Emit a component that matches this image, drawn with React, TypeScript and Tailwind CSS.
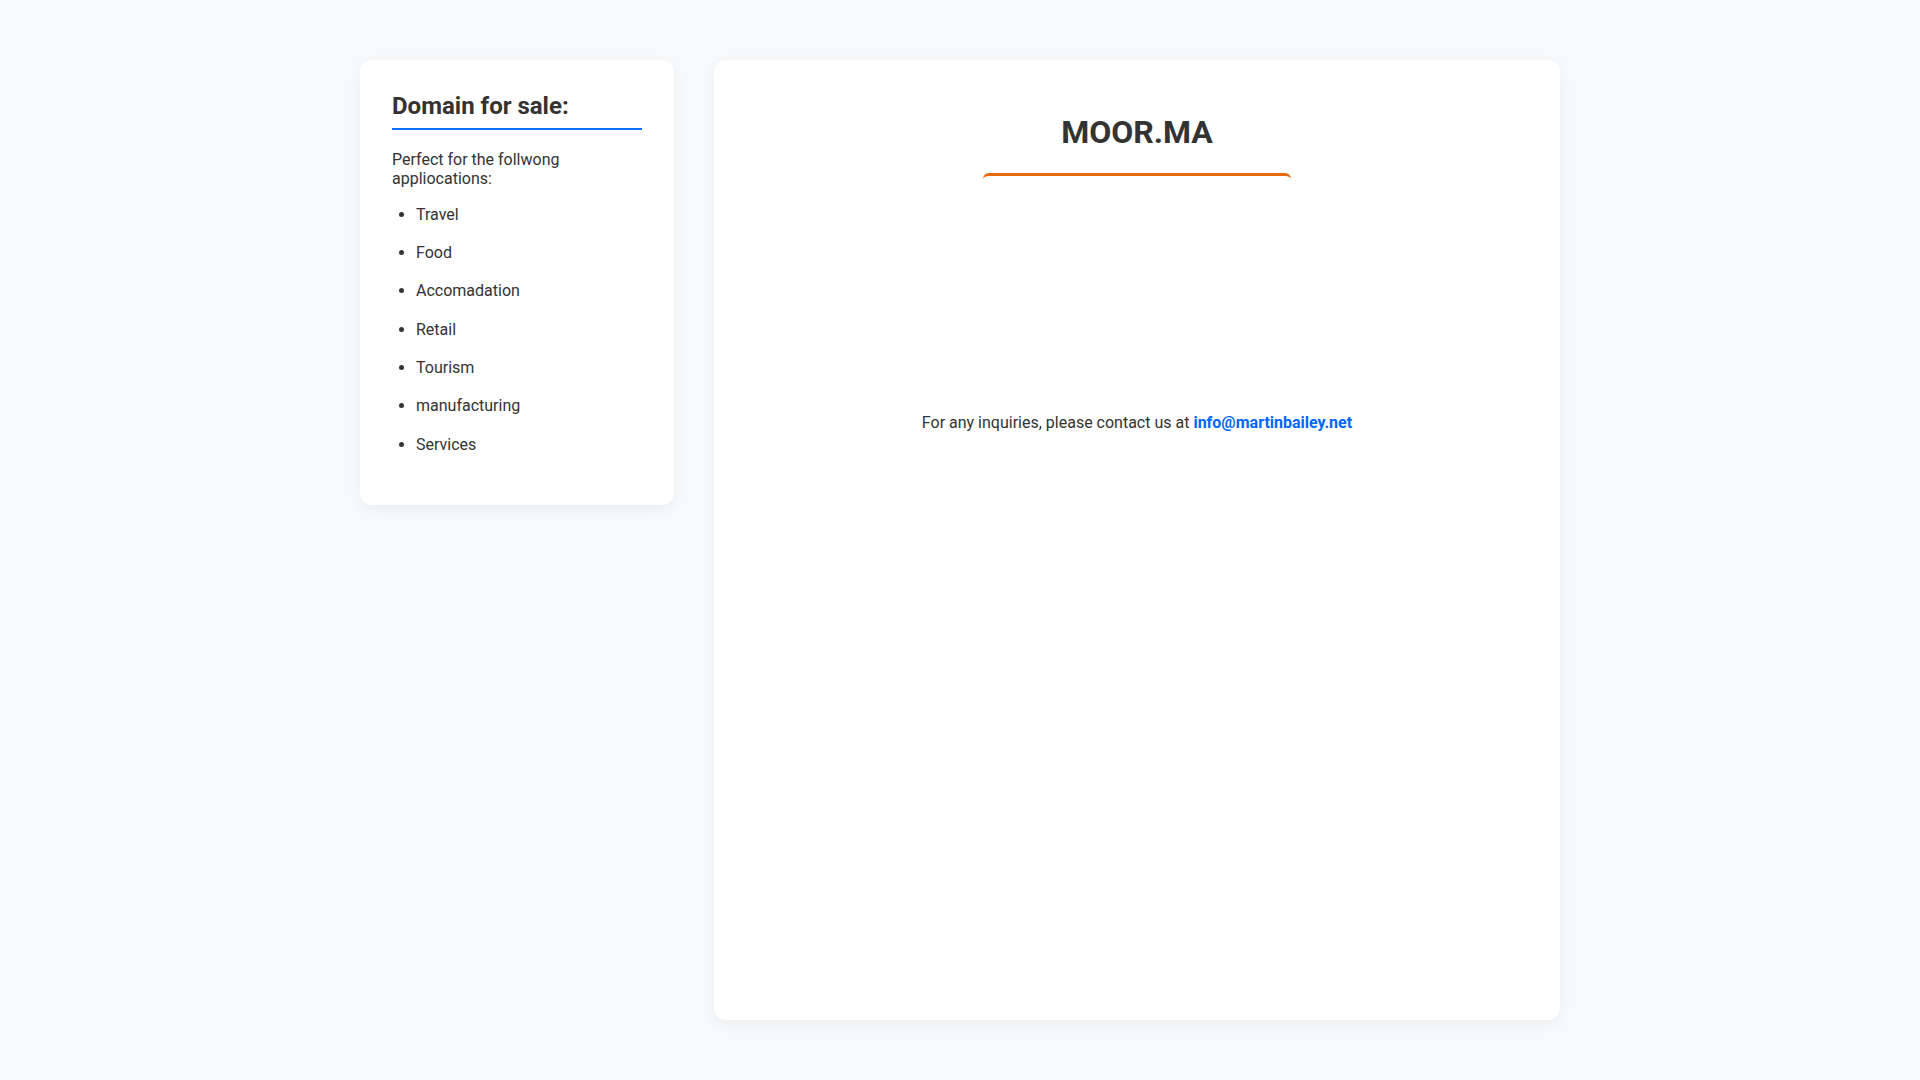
export default function App() {
  const items = ["Travel", "Food", "Accomadation", "Retail", "Tourism", "manufacturing", "Services"];
  return (
    <div
      className="min-h-screen bg-[#f8f9fa] text-[#333333]"
      style={{ fontFamily: "Roboto, 'Liberation Sans', sans-serif" }}
    >
      <div className="mx-auto flex w-[1200px] items-start gap-[40px] py-[60px]">
        <aside className="w-[314px] shrink-0 rounded-[12px] bg-white p-[32px] shadow-[0_4px_14px_rgba(0,0,0,0.05)]">
          <h2 className="border-b-2 border-[#0d6efd] pb-[7px] text-[24px] font-bold leading-[28.8px] text-[#333333]">
            Domain for sale:
          </h2>
          <p className="mt-[20px] text-[16px] leading-[19px]">
            Perfect for the follwong appliocations:
          </p>
          <ul className="mt-[8px] mb-[9px] list-disc pl-[24px] text-[16px] leading-[38.33px]">
            {items.map((it) => (
              <li key={it}>{it}</li>
            ))}
          </ul>
        </aside>
        <main className="flex h-[960px] flex-1 flex-col items-center rounded-[12px] bg-white p-[32px] shadow-[0_4px_14px_rgba(0,0,0,0.05)]">
          <h1 className="mt-[21.4px] mb-[21.4px] text-[32px] font-bold leading-[38.4px] text-[#333333]">
            MOOR.MA
          </h1>
          <div className="h-[220px] w-[308px] rounded-t-[6px] border-t-[3px] border-[#e8690c]" />
          <p className="mt-[20px] text-[16px] leading-[19.2px]">
            For any inquiries, please contact us at{" "}
            <a href="#" className="font-bold text-[#0066ff]">
              info@martinbailey.net
            </a>
          </p>
        </main>
      </div>
    </div>
  );
}
